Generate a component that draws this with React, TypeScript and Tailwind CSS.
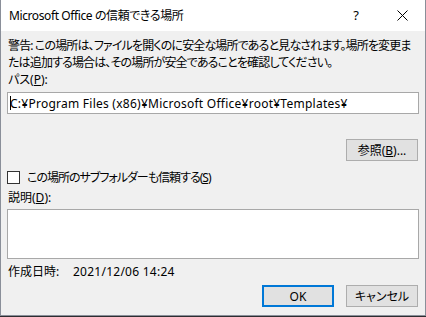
import React from 'react'

const FONT = "font-['Noto_Sans','Noto_Sans_CJK_JP',sans-serif] [font-feature-settings:'palt']"

function Btn({ children, primary }: { children: React.ReactNode; primary?: boolean }) {
  return (
    <div
      className={`w-[72px] h-[22px] flex items-center justify-center bg-[#e1e1e1] text-[12px] text-black ${
        primary ? 'border-2 border-[#0078d7]' : 'border border-[#adadad]'
      }`}
    >
      {children}
    </div>
  )
}

export default function App() {
  return (
    <div className={`w-[426px] h-[317px] bg-[#2d2d30] overflow-hidden ${FONT}`}>
      <div className="w-[426px] h-[316px] flex flex-col bg-[#f0f0f0] border-x border-b border-[#8a8f99]">
        {/* title bar */}
        <div className="h-[31px] bg-white flex items-center pl-[8px] shrink-0">
          <span className="text-[12px] text-black whitespace-nowrap tracking-[-0.4px]">Microsoft Office の信頼できる場所</span>
          <div className="ml-auto flex items-center">
            <span className="w-[46px] text-center text-[13px] text-black">?</span>
            <div className="w-[46px] flex justify-center">
              <svg width="11" height="11" viewBox="0 0 11 11">
                <path d="M0.5 0.5 L10.5 10.5 M10.5 0.5 L0.5 10.5" stroke="#000" strokeWidth="1" />
              </svg>
            </div>
          </div>
        </div>

        {/* body */}
        <div className="flex flex-col px-[6px] pt-[6px] text-[12px] text-black leading-[17px]">
          <p className="pl-[1px] whitespace-nowrap tracking-[-0.85px]">
            警告: この場所は、ファイルを開くのに安全な場所であると見なされます。場所を変更ま
            <br />
            たは追加する場合は、その場所が安全であることを確認してください。
          </p>
          <span className="pl-[1px]">
            パス(<u>P</u>):
          </span>
          <div className="mt-[4px] h-[22px] bg-white border border-[#a8a8a8] flex items-center pl-[2px] whitespace-nowrap tracking-[0.25px]">
            <span className="w-px h-[14px] bg-black mr-[-1px]" />
            C:¥Program Files (x86)¥Microsoft Office¥root¥Templates¥
          </div>
          <div className="mt-[25px] self-end mr-[1px]">
            <Btn>
              参照(<u>B</u>)...
            </Btn>
          </div>
          <div className="mt-[8px] h-[17px] flex items-center gap-[7px]">
            <div className="w-[13px] h-[13px] bg-white border border-[#333]" />
            <span className="tracking-[-1px]">
              この場所のサブフォルダーも信頼する(<u>S</u>)
            </span>
          </div>
          <span className="mt-[3px] pl-[1px]">
            説明(<u>D</u>):
          </span>
          <div className="mt-[3px] h-[50px] bg-white border border-[#a8a8a8]" />
          <div className="mt-[4px] flex pl-[1px]">
            <span className="w-[65px]">作成日時:</span>
            <span className="tracking-[0.25px]">2021/12/06 14:24</span>
          </div>
          <div className="mt-[5px] flex justify-end gap-[12px] mr-[1px]">
            <Btn primary>OK</Btn>
            <Btn>キャンセル</Btn>
          </div>
        </div>
      </div>
    </div>
  )
}
